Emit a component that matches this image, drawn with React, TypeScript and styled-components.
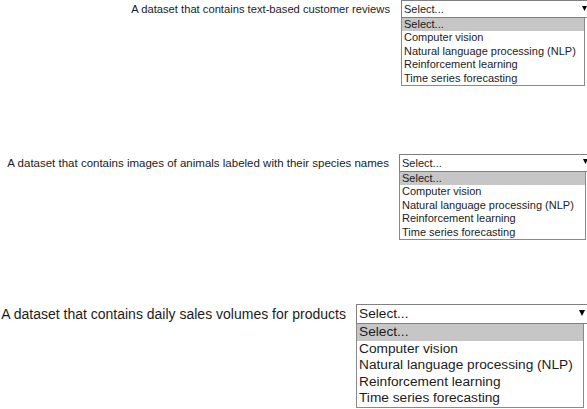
import React from 'react';
import styled, { createGlobalStyle } from 'styled-components';

const GlobalStyle = createGlobalStyle`
  html, body {
    margin: 0;
    padding: 0;
    background: #ffffff;
  }
  body {
    font-family: "Liberation Sans", Arial, sans-serif;
    color: #1c1c1c;
  }
`;

type Size = 'sm' | 'lg';

// option font, select box height, option row height
const metrics = {
  sm: { font: 11, box: 18, row: 13.4, arrowPad: 3 },
  lg: { font: 13.7, box: 20, row: 16.6, arrowPad: 4 },
};

const OPTIONS = [
  'Select...',
  'Computer vision',
  'Natural language processing (NLP)',
  'Reinforcement learning',
  'Time series forecasting',
];

const Page = styled.div`
  width: 587px;
  height: 409px;
  overflow: hidden;
  display: flex;
  flex-direction: column;
`;

const Row = styled.div<{ $top: number; $gap: number }>`
  display: flex;
  align-items: flex-start;
  margin-top: ${p => p.$top}px;
  gap: ${p => p.$gap}px;
`;

const Label = styled.div<{ $width: number; $size: Size; $font: number }>`
  flex: 0 0 ${p => p.$width}px;
  text-align: right;
  white-space: nowrap;
  font-size: ${p => p.$font}px;
  height: ${p => metrics[p.$size].box}px;
  line-height: ${p => metrics[p.$size].box + 1}px;
`;

const Dropdown = styled.div<{ $width: number }>`
  flex: 0 0 ${p => p.$width}px;
  display: flex;
  flex-direction: column;
`;

const SelectBox = styled.div<{ $size: Size }>`
  box-sizing: border-box;
  height: ${p => metrics[p.$size].box}px;
  border: 1px solid #808080;
  background: #ffffff;
  display: flex;
  align-items: center;
  justify-content: space-between;
  padding: 0 ${p => metrics[p.$size].arrowPad}px 0 2px;
  font-size: ${p => metrics[p.$size].font}px;
  white-space: nowrap;
`;

const Arrow = styled.svg`
  flex: 0 0 auto;
  margin-bottom: 2px;
`;

const List = styled.div<{ $width: number }>`
  box-sizing: border-box;
  width: ${p => p.$width}px;
  border: 1px solid #8a8a8a;
  border-top: none;
  background: #ffffff;
`;

const Option = styled.div<{ $size: Size; $active?: boolean }>`
  height: ${p => metrics[p.$size].row}px;
  line-height: ${p => metrics[p.$size].row}px;
  padding-left: 2px;
  font-size: ${p => metrics[p.$size].font}px;
  white-space: nowrap;
  background: ${p => (p.$active ? '#c6c6c6' : 'transparent')};
`;

interface QuestionProps {
  text: string;
  size: Size;
  labelFont: number;
  top: number;
  labelWidth: number;
  gap: number;
  listWidth: number;
}

const Question = ({ text, size, labelFont, top, labelWidth, gap, listWidth }: QuestionProps) => (
  <Row $top={top} $gap={gap}>
    <Label $width={labelWidth} $size={size} $font={labelFont}>{text}</Label>
    <Dropdown $width={listWidth + 6}>
      <SelectBox $size={size}>
        <span>Select...</span>
        <Arrow width={size === 'lg' ? 6 : 5} height={size === 'lg' ? 6 : 5} viewBox="0 0 6 5" preserveAspectRatio="none">
          <path d="M0 0 H6 L3 5 Z" fill="#000" />
        </Arrow>
      </SelectBox>
      <List $width={listWidth}>
        {OPTIONS.map((o, i) => (
          <Option key={o} $size={size} $active={i === 0}>{o}</Option>
        ))}
      </List>
    </Dropdown>
  </Row>
);

export default function App() {
  return (
    <Page>
      <GlobalStyle />
      <Question
        text="A dataset that contains text-based customer reviews"
        size="sm"
        labelFont={11.2}
        top={0}
        labelWidth={390}
        gap={11}
        listWidth={184}
      />
      <Question
        text="A dataset that contains images of animals labeled with their species names"
        size="sm"
        labelFont={11.5}
        top={68}
        labelWidth={389}
        gap={10}
        listWidth={187}
      />
      <Question
        text="A dataset that contains daily sales volumes for products"
        size="lg"
        labelFont={14}
        top={64}
        labelWidth={346}
        gap={10}
        listWidth={228}
      />
    </Page>
  );
}
